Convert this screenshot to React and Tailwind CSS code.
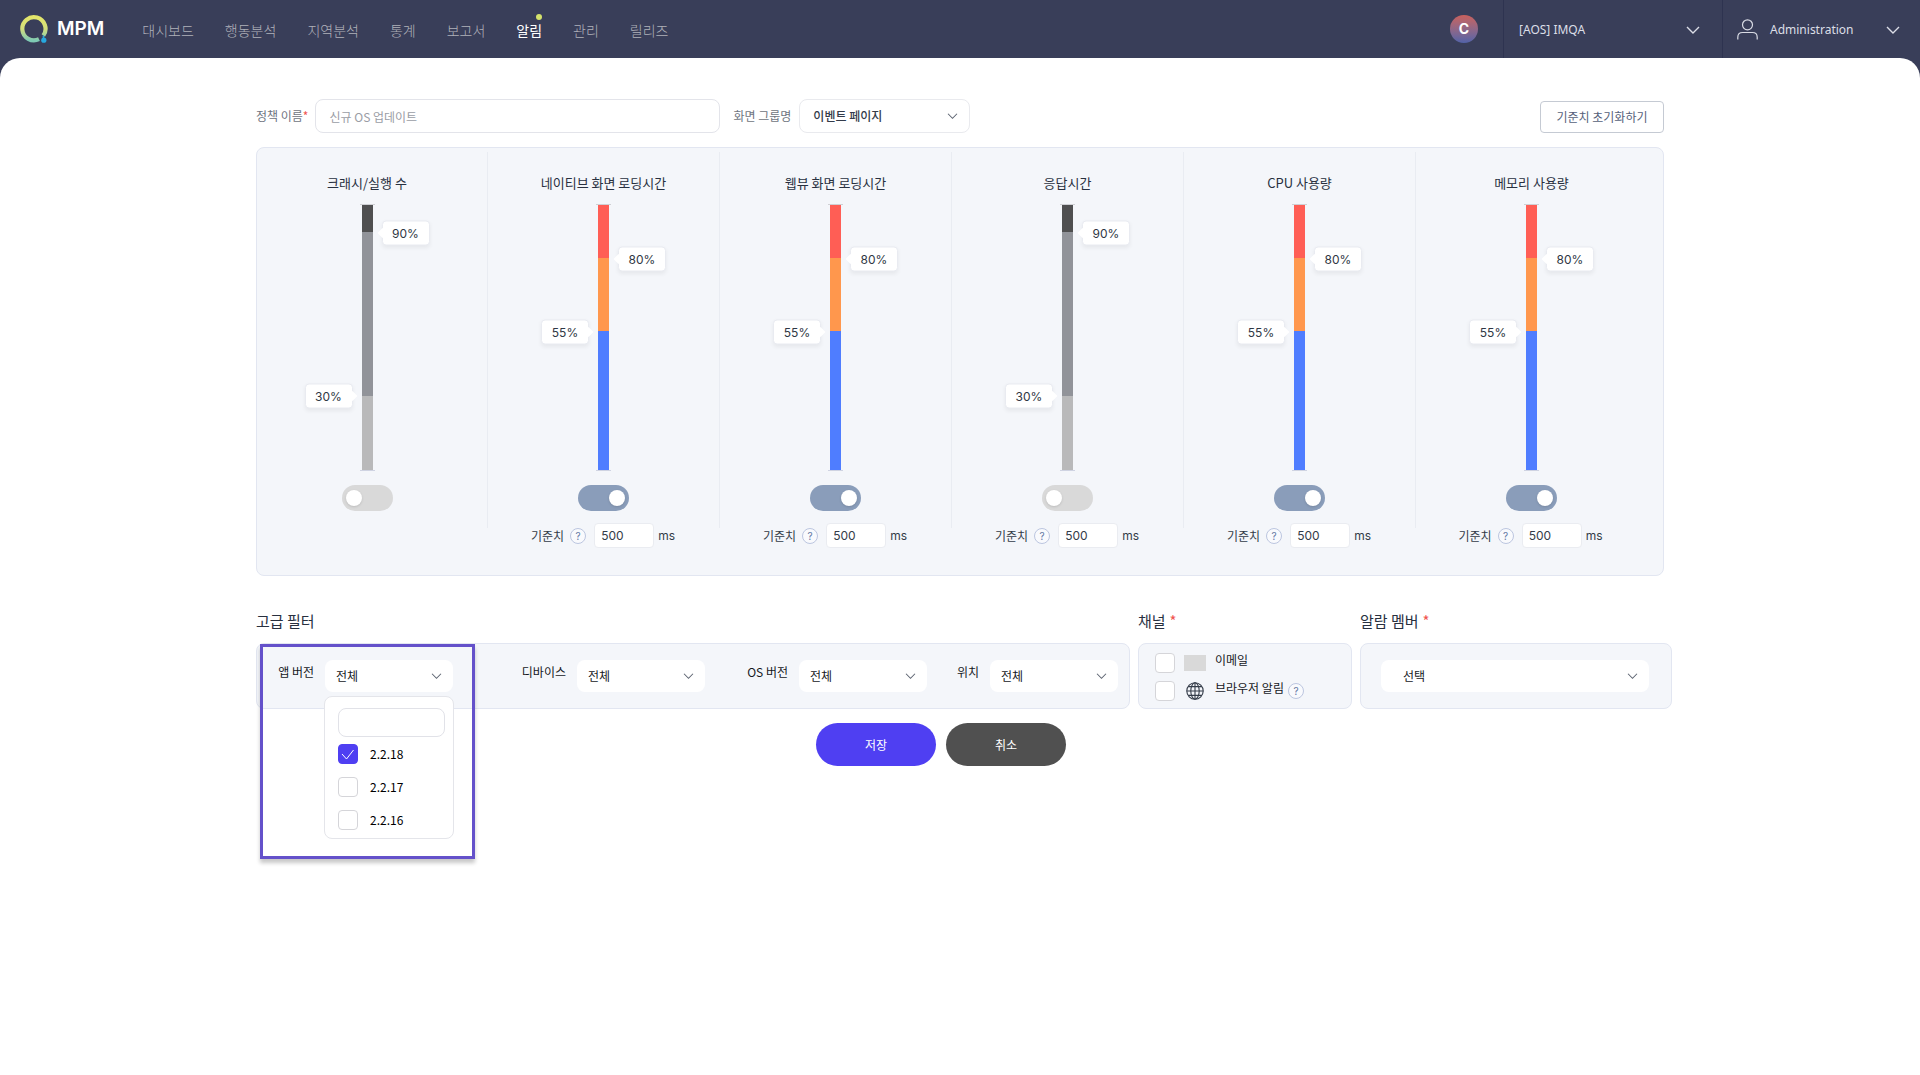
import React, { useState } from "react";

const NAV_ITEMS = ["대시보드", "행동분석", "지역분석", "통계", "보고서", "알림", "관리", "릴리즈"];

// flex weights of the segments, top to bottom, and where the handles sit on the bar
const GRAY_BAR = {
  segments: [
    { grow: 28, color: "bg-[#4f4f50]" },
    { grow: 163, color: "bg-[#919399]" },
    { grow: 75, color: "bg-[#b9b9ba]" },
  ],
  high: { label: "90%", top: 29 },
  low: { label: "30%", top: 192 },
};

const COLOR_BAR = {
  segments: [
    { grow: 54, color: "bg-[#ff5e55]" },
    { grow: 73, color: "bg-[#ff974d]" },
    { grow: 139, color: "bg-[#4f7dff]" },
  ],
  high: { label: "80%", top: 55 },
  low: { label: "55%", top: 128 },
};

const METRICS = [
  { id: "crash", title: "크래시/실행 수", bar: GRAY_BAR, on: false, baseline: false },
  { id: "native", title: "네이티브 화면 로딩시간", bar: COLOR_BAR, on: true, baseline: true },
  { id: "webview", title: "웹뷰 화면 로딩시간", bar: COLOR_BAR, on: true, baseline: true },
  { id: "response", title: "응답시간", bar: GRAY_BAR, on: false, baseline: true },
  { id: "cpu", title: "CPU 사용량", bar: COLOR_BAR, on: true, baseline: true },
  { id: "memory", title: "메모리 사용량", bar: COLOR_BAR, on: true, baseline: true },
];

function Chevron({ className }) {
  return (
    <svg className={className} viewBox="0 0 14 8" fill="none" stroke="currentColor" aria-hidden="true">
      <path d="M1 1l6 6 6-6" strokeWidth="1.4" />
    </svg>
  );
}

function Logo() {
  return (
    <svg className="h-7 w-7" viewBox="0 0 28 28" fill="none" aria-hidden="true">
      <defs>
        <linearGradient id="logoRing" x1="0" y1="0" x2="0" y2="1">
          <stop offset="0" stopColor="#e3e56b" />
          <stop offset="0.5" stopColor="#d3df7c" />
          <stop offset="1" stopColor="#7fcab4" />
        </linearGradient>
      </defs>
      <path d="M19 24.2A11.6 11.6 0 1 1 23.3 20.6" stroke="url(#logoRing)" strokeWidth="4.2" />
      <path d="M23.3 20.6l.5 4.600" stroke="#27a9e0" strokeWidth="1.5" />
      <circle cx="23.8" cy="25.2" r="2.6" fill="#27a9e0" />
    </svg>
  );
}

function UserIcon() {
  return (
    <svg className="h-[21px] w-[21px]" viewBox="0 0 21 21" fill="none" stroke="#d9dbe4" strokeWidth="1.2" aria-hidden="true">
      <circle cx="10.5" cy="5.8" r="5" />
      <path d="M.8 20.600v-2.300c0-3 2-4.800 4.800-4.800h9.800c2.800 0 4.800 1.800 4.800 4.800v2.300" />
    </svg>
  );
}

function GlobeIcon() {
  return (
    <svg className="h-[18px] w-[18px]" viewBox="0 0 18 18" fill="none" stroke="#333b48" strokeWidth="1.1" aria-hidden="true">
      <circle cx="9" cy="9" r="8.2" />
      <ellipse cx="9" cy="9" rx="4.2" ry="8.2" />
      <path d="M9 .8v16.400M.8 9h16.400M2.200 4.600h13.600M2.200 13.400h13.600" />
    </svg>
  );
}

function HelpIcon() {
  return (
    <button
      type="button"
      aria-label="도움말"
      className="flex h-4 w-4 shrink-0 items-center justify-center rounded-full border border-[#bcc6e0] bg-[#f9fafd] font-['Inter',sans-serif] text-[10px] leading-none text-[#6478a4]"
    >
      ?
    </button>
  );
}

function Header() {
  return (
    <header className="flex h-[58px] items-center text-[#dcdee7]">
      <a href="#home" className="flex items-center gap-[9px] pl-5">
        <Logo />
        <span className="font-['Inter',sans-serif] text-[19px] font-semibold text-white">MPM</span>
      </a>
      <nav className="ml-[38px] flex gap-[31px]">
        {NAV_ITEMS.map((item) => {
          const active = item === "알림";
          return (
            <a
              key={item}
              href="#menu"
              className={`relative pt-[2px] text-sm ${active ? "text-white" : "font-light text-[#b0b1ba]"}`}
            >
              {item}
              {active && <span className="absolute -top-1 right-0 h-[6px] w-[6px] rounded-full bg-[#d5e26c]" />}
            </a>
          );
        })}
      </nav>
      <div className="ml-auto flex h-full items-center font-['Noto_Sans',sans-serif] text-xs">
        <button
          type="button"
          className="mr-[25px] flex h-7 w-7 items-center justify-center rounded-full bg-linear-to-b from-[#c9605c] to-[#5262a8] font-['Inter',sans-serif] text-sm font-bold text-white"
        >
          C
        </button>
        <button type="button" className="flex h-full w-[219px] items-center justify-between border-l border-[#2e3350] pt-px pr-[22px] pl-[15px]">
          [AOS] IMQA
          <Chevron className="h-2 w-[14px]" />
        </button>
        <button type="button" className="flex h-full w-[198px] items-center border-l border-[#2e3350] pt-px pr-5 pl-[14px]">
          <UserIcon />
          <span className="ml-3">Administration</span>
          <Chevron className="ml-auto h-2 w-[14px]" />
        </button>
      </div>
    </header>
  );
}

function Handle({ label, top, side }) {
  const right = side === "right";
  return (
    <div
      className={`absolute flex h-[25px] w-12 -translate-y-1/2 items-center justify-center rounded-[4px] border border-[#e9ebf1] bg-white font-['Inter',sans-serif] text-xs text-[#2f3744] shadow-[0_2px_4px_rgba(0,0,0,0.06)] ${
        right ? "left-5" : "right-5"
      }`}
      style={{ top }}
    >
      <span
        className={`absolute top-2 h-[7px] w-[7px] rotate-45 bg-white ${right ? "-left-1" : "-right-1"}`}
      />
      {label}
    </div>
  );
}

function ThresholdBar({ bar }) {
  return (
    <div className="relative flex h-[267px] w-[11px] flex-col">
      {bar.segments.map((seg) => (
        <div key={seg.color} className={seg.color} style={{ flexGrow: seg.grow }} />
      ))}
      <span className="absolute top-0 -left-[2px] h-px w-[15px] bg-[#cfd0d4]" />
      <span className="absolute bottom-0 -left-[2px] h-px w-[15px] bg-[#cfd3e2]" />
      <Handle side="right" label={bar.high.label} top={bar.high.top} />
      <Handle side="left" label={bar.low.label} top={bar.low.top} />
    </div>
  );
}

function Toggle({ label, defaultOn }) {
  return (
    <label className="flex cursor-pointer">
      <input type="checkbox" role="switch" aria-label={label} defaultChecked={defaultOn} className="peer sr-only" />
      <span className="flex h-[26px] w-[51px] items-center rounded-full bg-[#d9d9d9] px-1 peer-checked:justify-end peer-checked:bg-[#8a9dba]">
        <span className="h-4 w-4 rounded-full bg-white shadow" />
      </span>
    </label>
  );
}

function MetricColumn({ metric }) {
  return (
    <div className="group">
      <div className="flex h-[376px] flex-col items-center border-r border-[#e9ecf2] pt-[21px] group-first:pr-[10px] group-last:border-r-0 group-last:pr-4">
        <h3 className="text-[13px] leading-5 text-[#28303f]">{metric.title}</h3>
        <div className="mt-[11px]">
          <ThresholdBar bar={metric.bar} />
        </div>
        <div className="mt-[14px]">
          <Toggle label={metric.title} defaultOn={metric.on} />
        </div>
      </div>
      {metric.baseline && (
        <div className="-mt-[5px] flex items-center justify-center pr-[2px] text-xs text-[#333b48] group-last:pr-[18px]">
          <label htmlFor={`base-${metric.id}`} className="mr-[6px]">기준치</label>
          <HelpIcon />
          <input
            id={`base-${metric.id}`}
            type="text"
            defaultValue="500"
            className="ml-2 h-[25px] w-[60px] rounded-[4px] border border-[#eaecf1] bg-white px-[6px] font-['Inter',sans-serif] text-xs"
          />
          <span className="ml-1 font-['Inter',sans-serif]">ms</span>
        </div>
      )}
    </div>
  );
}

function Select({ id, options, className, iconClassName }) {
  return (
    <div className="relative">
      <select id={id} className={`appearance-none rounded-lg bg-white text-xs ${className}`}>
        {options.map((opt) => (
          <option key={opt}>{opt}</option>
        ))}
      </select>
      <Chevron className={`pointer-events-none absolute top-1/2 h-[6px] w-[11px] -translate-y-1/2 text-[#5d6471] ${iconClassName}`} />
    </div>
  );
}

function Checkbox({ id, checked, onChange }) {
  return (
    <span className="relative flex h-5 w-5 shrink-0">
      <input
        id={id}
        type="checkbox"
        checked={checked}
        onChange={onChange}
        className="h-5 w-5 appearance-none rounded-[4px] border border-[#d5d5d9] bg-white checked:border-[#4f3ff2] checked:bg-[#4f3ff2]"
      />
      {checked && (
        <svg className="pointer-events-none absolute inset-0 h-5 w-5" viewBox="0 0 20 20" fill="none" stroke="white" aria-hidden="true">
          <path d="M4 10l4.500 5L15.500 6" />
        </svg>
      )}
    </span>
  );
}

function VersionFilter() {
  const [selected, setSelected] = useState(["2.2.18"]);

  const toggle = (version) => {
    setSelected((prev) => (prev.includes(version) ? prev.filter((v) => v !== version) : [...prev, version]));
  };

  return (
    <div className="relative flex items-center justify-end gap-[11px]">
      <label htmlFor="app-version" className="pb-2">앱 버전</label>
      <div className="relative">
        <button
          id="app-version"
          type="button"
          aria-expanded="true"
          className="flex h-8 w-32 items-center justify-between rounded-lg bg-white px-[11px] text-[#16181d]"
        >
          전체
          <Chevron className="h-[6px] w-[11px] text-[#5d6471]" />
        </button>
        <div className="absolute top-9 -left-px w-[130px] rounded-lg border border-[#e4e5ea] bg-white pt-[11px] pr-2 pb-2 pl-[13px]">
          <input
            type="text"
            aria-label="버전 검색"
            className="mb-[7px] block h-[29px] w-full rounded-lg border border-[#e1e2e8] px-2"
          />
          <ul className="flex flex-col gap-[13px] text-black">
            {["2.2.18", "2.2.17", "2.2.16"].map((version) => (
              <li key={version} className="flex h-5 items-center gap-3">
                <Checkbox id={`v-${version}`} checked={selected.includes(version)} onChange={() => toggle(version)} />
                <label htmlFor={`v-${version}`}>{version}</label>
              </li>
            ))}
          </ul>
        </div>
      </div>
      {/* guide frame around the open filter */}
      <div className="pointer-events-none absolute top-0 left-[3px] h-[215px] w-[215px] border-3 border-[#6451ca] shadow-[0_4px_4px_rgba(0,0,0,0.22)]" />
    </div>
  );
}

function FilterField({ id, label }) {
  return (
    <div className="flex items-center justify-end gap-[11px]">
      <label htmlFor={id} className="pb-2">{label}</label>
      <Select id={id} options={["전체"]} className="h-8 w-32 px-[11px] text-[#16181d]" iconClassName="right-[11px]" />
    </div>
  );
}

function SectionTitle({ children, required }) {
  return (
    <h2 className="mb-[10px] text-[15px] leading-6 text-[#28303f]">
      {children}
      {required && <span className="ml-1 text-[#f0544f]">*</span>}
    </h2>
  );
}

export default function App() {
  const [channels, setChannels] = useState({ email: false, browser: false });

  return (
    <div className="min-h-screen bg-[#393e59] font-['Noto_Sans_CJK_KR',sans-serif]">
      <Header />
      <main className="min-h-[calc(100vh-58px)] rounded-t-[20px] bg-white px-8 pt-[41px] text-xs">
        <div className="mx-auto max-w-[1408px]">
          <div className="flex items-center text-[#6f7581]">
            <label htmlFor="policy-name">
              정책 이름<span className="text-[#f0544f]">*</span>
            </label>
            <input
              id="policy-name"
              type="text"
              placeholder="신규 OS 업데이트"
              className="ml-[7px] h-[34px] w-[405px] rounded-lg border border-[#e3e4ea] px-[13px] placeholder:text-[#9a9da5]"
            />
            <label htmlFor="screen-group" className="mr-2 ml-[13px]">화면 그룹명</label>
            <Select
              id="screen-group"
              options={["이벤트 페이지"]}
              className="h-[34px] w-[171px] border border-[#e9eaee] px-[13px] font-medium text-[#333b4a]"
              iconClassName="right-[12px]"
            />
            <button type="button" className="mt-[2px] ml-auto h-8 w-[124px] rounded-[4px] border border-[#c5cad3] text-[#56617a]">
              기준치 초기화하기
            </button>
          </div>

          <section className="mt-[14px] grid grid-cols-[231fr_232fr_232fr_232fr_232fr_247fr] rounded-lg border border-[#e2e6f1] bg-[#f4f6fa] pt-1 pb-[27px]">
            {METRICS.map((metric) => (
              <MetricColumn key={metric.id} metric={metric} />
            ))}
          </section>

          <div className="-mr-2 mt-[33px] grid grid-cols-[874fr_214fr_312fr] gap-2 text-[#16181d]">
            <section>
              <SectionTitle>고급 필터</SectionTitle>
              <div className="grid h-[66px] grid-cols-[196fr_252fr_222fr_191fr] rounded-lg border border-[#e2e6f1] bg-[#f4f6fa] pr-[11px]">
                <VersionFilter />
                <FilterField id="device" label="디바이스" />
                <FilterField id="os-version" label="OS 버전" />
                <FilterField id="location" label="위치" />
              </div>
            </section>
            <section>
              <SectionTitle required>채널</SectionTitle>
              <div className="flex h-[66px] flex-col justify-center gap-2 rounded-lg border border-[#e2e6f1] bg-[#f4f6fa] pt-px pl-4">
                <div className="flex h-5 items-center">
                  <Checkbox
                    id="ch-email"
                    checked={channels.email}
                    onChange={() => setChannels({ ...channels, email: !channels.email })}
                  />
                  <span className="ml-[9px] h-4 w-[22px] bg-[#d9d9d9]" />
                  <label htmlFor="ch-email" className="ml-[9px] pb-[6px]">이메일</label>
                </div>
                <div className="flex h-5 items-center">
                  <Checkbox
                    id="ch-browser"
                    checked={channels.browser}
                    onChange={() => setChannels({ ...channels, browser: !channels.browser })}
                  />
                  <span className="ml-[9px] flex w-[22px] justify-center">
                    <GlobeIcon />
                  </span>
                  <label htmlFor="ch-browser" className="mr-1 ml-[9px] pb-[6px]">브라우저 알림</label>
                  <HelpIcon />
                </div>
              </div>
            </section>
            <section>
              <SectionTitle required>알람 멤버</SectionTitle>
              <div className="flex h-[66px] flex-col justify-center rounded-lg border border-[#e2e6f1] bg-[#f4f6fa] pr-[22px] pl-5">
                <Select id="member" options={["선택"]} className="h-8 w-full px-[22px] text-[#16181d]" iconClassName="right-[11px]" />
              </div>
            </section>
          </div>

          <div className="mt-[14px] flex justify-center gap-[10px] pr-[38px] text-white">
            <button type="button" className="h-[43px] w-[120px] rounded-full bg-[#4f3ff2]">저장</button>
            <button type="button" className="h-[43px] w-[120px] rounded-full bg-[#505050]">취소</button>
          </div>
        </div>
      </main>
    </div>
  );
}
